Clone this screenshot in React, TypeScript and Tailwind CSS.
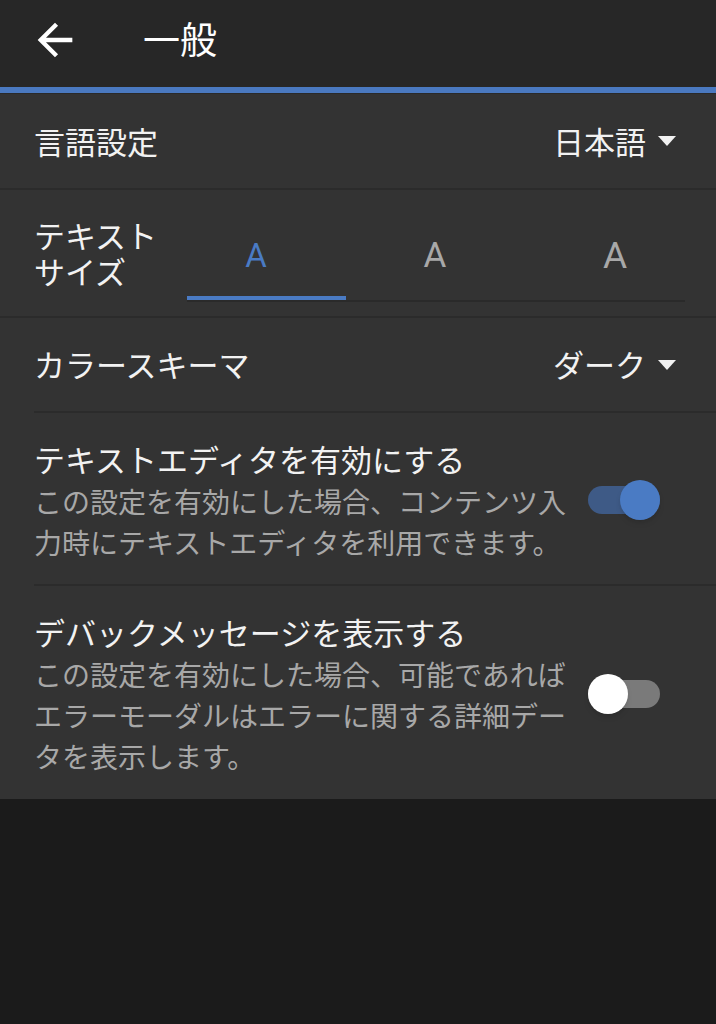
import React, { useState } from "react";

const JP = { fontFamily: '"Noto Sans CJK JP", "Noto Sans", sans-serif' };

function Caret() {
  return (
    <svg width="18" height="10" viewBox="0 0 18 10" className="ml-[12px]">
      <path d="M0 0h18L9 10z" fill="#f2f2f2" />
    </svg>
  );
}

function Toggle({ on }: { on: boolean }) {
  return (
    <div className="relative mr-[16px] h-[40px] w-[72px] shrink-0">
      <div
        className={
          "absolute left-0 top-[6px] h-[28px] w-[72px] rounded-full " +
          (on ? "bg-[#3e5a86]" : "bg-[#7a7a7a]")
        }
      />
      <div
        className={
          "absolute top-0 h-[40px] w-[40px] rounded-full shadow-md " +
          (on ? "right-0 bg-[#4a7bc4]" : "left-0 bg-white")
        }
      />
    </div>
  );
}

export default function App() {
  const [size, setSize] = useState(0);
  const sizes = [
    { w: "w-[138px]", f: "text-[33px]" },
    { w: "w-[220px]", f: "text-[35px]" },
    { w: "w-[140px]", f: "text-[37px]" },
  ];

  return (
    <div className="min-h-[1024px] w-full bg-[#1b1b1b]" style={JP}>
      <header className="flex h-[87px] items-center bg-[#272727] text-white">
        <svg width="52" height="52" viewBox="0 0 24 24" className="ml-[29px] mt-[-7px]">
          <path d="M20 11H7.83l5.59-5.59L12 4l-8 8 8 8 1.41-1.41L7.83 13H20v-2z" fill="#ffffff" />
        </svg>
        <h1 className="ml-[62px] mt-[-10px] text-[37px] leading-none">一般</h1>
      </header>
      <div className="h-[6px] bg-[#4a79c0]" />
      <div className="h-[1px] bg-[#2a2a2a]" />

      <main className="bg-[#333333] text-[#f2f2f2]">
        <div className="flex h-[96px] items-center justify-between border-b-2 border-[#2b2b2b] pl-[34px] pr-[40px]">
          <span className="text-[31px]">言語設定</span>
          <span className="flex items-center text-[31px]">
            日本語
            <Caret />
          </span>
        </div>

        <div className="flex items-center border-b-2 border-[#2b2b2b] pl-[34px] pr-[31px]">
          <div className="w-[153px] text-[31px] leading-[36px]">
            テキスト
            <br />
            サイズ
          </div>
          <div className="flex-1 pt-[26px] pb-[14px]">
            <div className="flex h-[80px]">
              {sizes.map((s, i) => (
                <button
                  key={i}
                  onClick={() => setSize(i)}
                  className={
                    "flex items-center justify-center " +
                    s.w +
                    " " +
                    s.f +
                    (size === i ? " text-[#4a7bc4]" : " text-[#a8a8a8]")
                  }
                  style={{ fontFamily: '"Roboto", "Noto Sans", sans-serif' }}
                >
                  A
                </button>
              ))}
            </div>
            <div className="h-[4px] w-[159px] bg-[#4a7bc4]" />
            <div className="h-[2px] w-full bg-[#2a2a2a]" />
          </div>
        </div>

        <div className="pl-[34px]">
          <div className="flex h-[95px] items-center justify-between border-b-2 border-[#2b2b2b] pr-[40px]">
            <span className="text-[31px]">カラースキーマ</span>
            <span className="flex items-center text-[31px]">
              ダーク
              <Caret />
            </span>
          </div>

          <div className="flex items-center justify-between border-b-2 border-[#2b2b2b] pt-[24px] pb-[21px] pr-[40px]">
            <div>
              <div className="text-[31px] leading-[44px]">テキストエディタを有効にする</div>
              <div className="text-[28px] leading-[41px] text-[#a8a8a8]">
                この設定を有効にした場合、コンテンツ入
                <br />
                力時にテキストエディタを利用できます。
              </div>
            </div>
            <Toggle on={true} />
          </div>

          <div className="flex items-center justify-between pt-[24px] pb-[22px] pr-[40px]">
            <div>
              <div className="text-[31px] leading-[44px]">デバックメッセージを表示する</div>
              <div className="text-[28px] leading-[41px] text-[#a8a8a8]">
                この設定を有効にした場合、可能であれば
                <br />
                エラーモーダルはエラーに関する詳細デー
                <br />
                タを表示します。
              </div>
            </div>
            <Toggle on={false} />
          </div>
        </div>
      </main>
    </div>
  );
}
